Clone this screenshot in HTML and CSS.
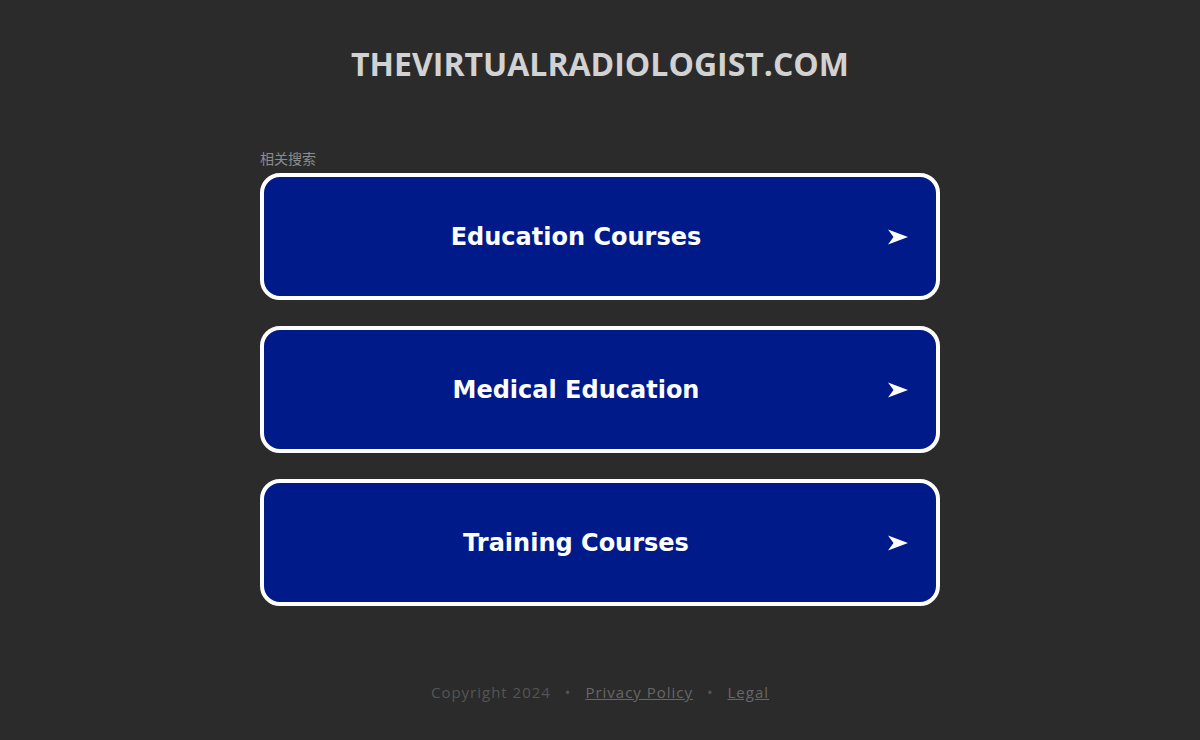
FILE: index.html
```html
<!DOCTYPE html>
<html lang="zh">
<head>
<meta charset="utf-8">
<title>thevirtualradiologist.com</title>
<link rel="stylesheet" href="styles.css">
</head>
<body>
<header class="header">
  <h1 class="domain">THEVIRTUALRADIOLOGIST.COM</h1>
</header>
<main class="content">
  <div class="related">相关搜索</div>
  <ul class="links">
    <li><a class="link-btn" href="#"><span class="label">Education Courses</span><svg class="arrow" viewBox="0 0 20 16" aria-hidden="true"><path d="M0 0.5 L20 8 L0 15.5 L5.5 8 Z"/></svg></a></li>
    <li><a class="link-btn" href="#"><span class="label">Medical Education</span><svg class="arrow" viewBox="0 0 20 16" aria-hidden="true"><path d="M0 0.5 L20 8 L0 15.5 L5.5 8 Z"/></svg></a></li>
    <li><a class="link-btn" href="#"><span class="label">Training Courses</span><svg class="arrow" viewBox="0 0 20 16" aria-hidden="true"><path d="M0 0.5 L20 8 L0 15.5 L5.5 8 Z"/></svg></a></li>
  </ul>
</main>
<footer class="footer">
  <span>Copyright 2024</span>
  <span class="dot">•</span>
  <a href="#">Privacy Policy</a>
  <span class="dot">•</span>
  <a href="#">Legal</a>
</footer>
</body>
</html>
```
FILE: styles.css
```css
html, body {
  margin: 0;
  padding: 0;
}
body {
  background: #2b2b2b;
  font-family: "Open Sans", "Liberation Sans", "Noto Sans CJK SC", sans-serif;
  height: 740px;
  overflow: hidden;
}
.header {
  padding-top: 43px;
  text-align: center;
}
.domain {
  margin: 0;
  font-family: "Open Sans", sans-serif;
  font-weight: 700;
  font-size: 32px;
  line-height: 42px;
  color: #d2d2d2;
  letter-spacing: 0;
}
.content {
  width: 680px;
  margin: 65px auto 0;
}
.related {
  font-family: "Noto Sans CJK SC", sans-serif;
  font-size: 14px;
  line-height: 16px;
  color: #8c8c8c;
  margin-bottom: 7px;
}
.links {
  list-style: none;
  margin: 0;
  padding: 0;
  display: flex;
  flex-direction: column;
  gap: 26px;
}
.link-btn {
  box-sizing: border-box;
  display: flex;
  align-items: center;
  height: 127px;
  padding: 1px 28px 0;
  gap: 28px;
  border: 4px solid #ffffff;
  border-radius: 20px;
  background: #001a8a;
  color: #ffffff;
  text-decoration: none;
}
.label {
  flex: 1;
  text-align: center;
  font-family: "DejaVu Sans", Verdana, sans-serif;
  font-weight: 700;
  font-size: 24px;
}
.arrow {
  width: 20px;
  height: 16px;
  fill: #ffffff;
  flex: none;
}
.footer {
  margin-top: 76px;
  text-align: center;
  font-size: 15px;
  letter-spacing: 1px;
  color: #555555;
}
.footer a {
  color: #676767;
  text-decoration: underline;
}
.dot {
  margin: 0 9px;
}
```
